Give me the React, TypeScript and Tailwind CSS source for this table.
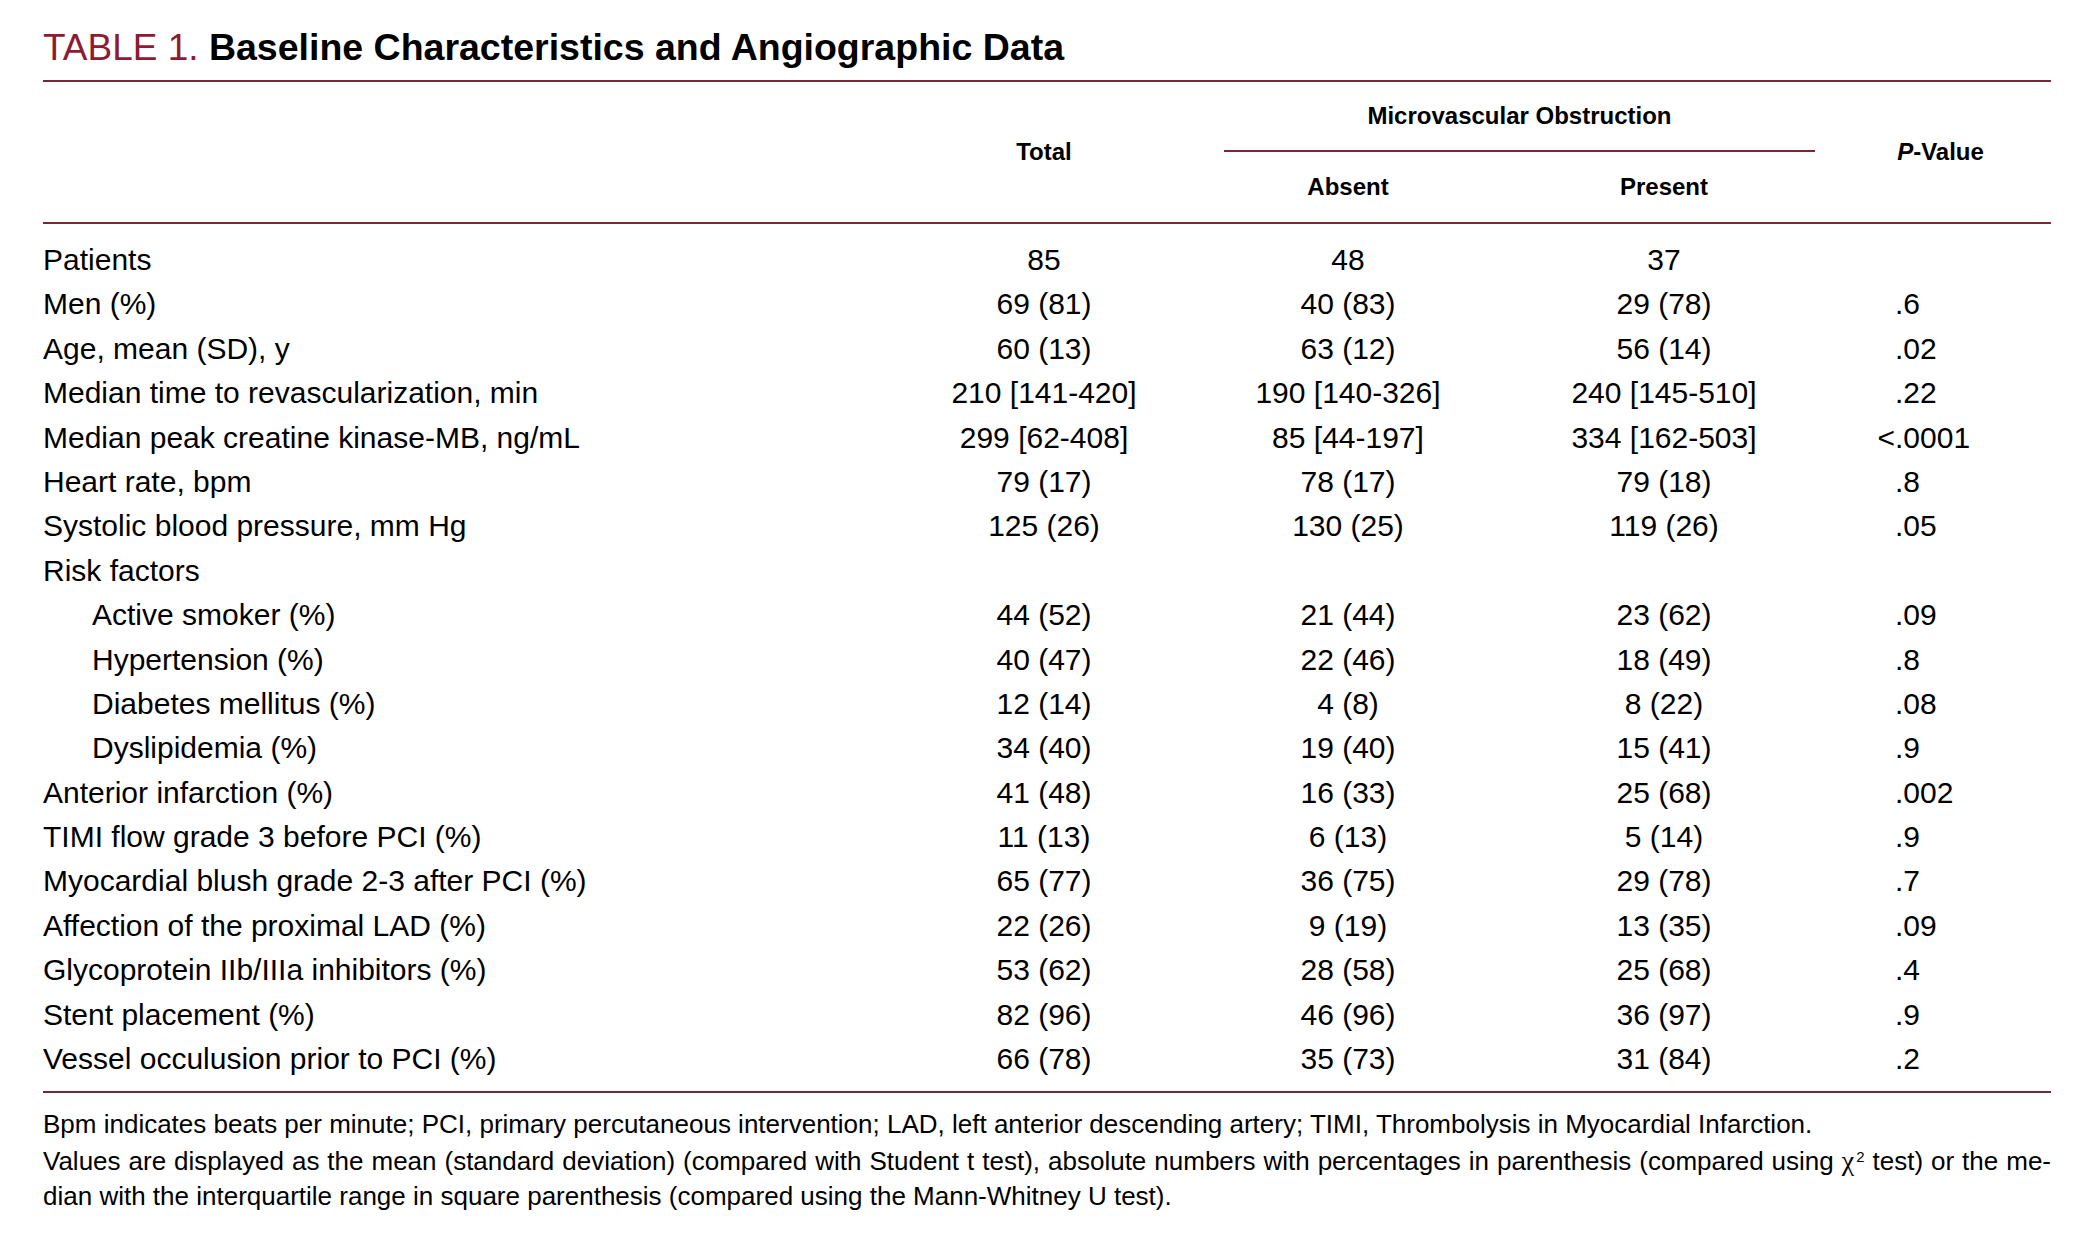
const rows = [
  { label: 'Patients', total: '85', absent: '48', present: '37', p: '' },
  { label: 'Men (%)', total: '69 (81)', absent: '40 (83)', present: '29 (78)', p: '.6' },
  { label: 'Age, mean (SD), y', total: '60 (13)', absent: '63 (12)', present: '56 (14)', p: '.02' },
  { label: 'Median time to revascularization, min', total: '210 [141-420]', absent: '190 [140-326]', present: '240 [145-510]', p: '.22' },
  { label: 'Median peak creatine kinase-MB, ng/mL', total: '299 [62-408]', absent: '85 [44-197]', present: '334 [162-503]', p: '<.0001' },
  { label: 'Heart rate, bpm', total: '79 (17)', absent: '78 (17)', present: '79 (18)', p: '.8' },
  { label: 'Systolic blood pressure, mm Hg', total: '125 (26)', absent: '130 (25)', present: '119 (26)', p: '.05' },
  { label: 'Risk factors', total: '', absent: '', present: '', p: '' },
  { label: 'Active smoker (%)', total: '44 (52)', absent: '21 (44)', present: '23 (62)', p: '.09', sub: true },
  { label: 'Hypertension (%)', total: '40 (47)', absent: '22 (46)', present: '18 (49)', p: '.8', sub: true },
  { label: 'Diabetes mellitus (%)', total: '12 (14)', absent: '4 (8)', present: '8 (22)', p: '.08', sub: true },
  { label: 'Dyslipidemia (%)', total: '34 (40)', absent: '19 (40)', present: '15 (41)', p: '.9', sub: true },
  { label: 'Anterior infarction (%)', total: '41 (48)', absent: '16 (33)', present: '25 (68)', p: '.002' },
  { label: 'TIMI flow grade 3 before PCI (%)', total: '11 (13)', absent: '6 (13)', present: '5 (14)', p: '.9' },
  { label: 'Myocardial blush grade 2-3 after PCI (%)', total: '65 (77)', absent: '36 (75)', present: '29 (78)', p: '.7' },
  { label: 'Affection of the proximal LAD (%)', total: '22 (26)', absent: '9 (19)', present: '13 (35)', p: '.09' },
  { label: 'Glycoprotein IIb/IIIa inhibitors (%)', total: '53 (62)', absent: '28 (58)', present: '25 (68)', p: '.4' },
  { label: 'Stent placement (%)', total: '82 (96)', absent: '46 (96)', present: '36 (97)', p: '.9' },
  { label: 'Vessel occulusion prior to PCI (%)', total: '66 (78)', absent: '35 (73)', present: '31 (84)', p: '.2' },
];

// p-values line up on the decimal point
function PValue({ value }: { value: string }) {
  if (!value) return null;
  const i = value.indexOf('.');
  return (
    <div className="flex pl-[45px]">
      <span className="w-[20px] text-right">{value.slice(0, i)}</span>
      <span>{value.slice(i)}</span>
    </div>
  );
}

export default function App() {
  return (
    <div className="min-h-screen bg-white font-['Liberation_Sans',Arial,sans-serif] text-black">
      <div className="pl-[43px] pt-[25px] w-[2051px]">
        <h1 className="text-[37px] leading-[44px] h-[55px] whitespace-nowrap">
          <span className="text-[#8e1b33]">TABLE 1. </span>
          <span className="font-bold text-[37.5px]">Baseline Characteristics and Angiographic Data</span>
        </h1>

        <div className="border-t-2 border-b-2 border-[#7a2638] grid grid-cols-[847px_308px_300px_332px_221px] grid-rows-[70px_70px] text-[24px] font-bold">
          <div className="col-start-2 row-start-1 row-span-2 flex items-center justify-center">Total</div>
          <div className="col-start-3 col-span-2 row-start-1 ml-[26px] mr-[15px] border-b-2 border-[#7a2638] flex items-center justify-center">
            Microvascular Obstruction
          </div>
          <div className="col-start-3 row-start-2 flex items-center justify-center">Absent</div>
          <div className="col-start-4 row-start-2 flex items-center justify-center">Present</div>
          <div className="col-start-5 row-start-1 row-span-2 flex items-center justify-center">
            <span className="italic">P</span>-Value
          </div>
        </div>

        <div className="pt-[14px] pb-[10px] border-b-2 border-[#7a2638] text-[30px]">
          {rows.map((r) => (
            <div key={r.label} className="grid grid-cols-[847px_308px_300px_332px_221px] h-[44.4px] leading-[44.4px] whitespace-nowrap">
              <div className={r.sub ? 'pl-[49px]' : ''}>{r.label}</div>
              <div className="text-center">{r.total}</div>
              <div className="text-center">{r.absent}</div>
              <div className="text-center">{r.present}</div>
              <PValue value={r.p} />
            </div>
          ))}
        </div>

        <div className="pt-[14px] text-[26px] leading-[35.5px]">
          <p className="whitespace-nowrap">
            Bpm indicates beats per minute; PCI, primary percutaneous intervention; LAD, left anterior descending artery; TIMI, Thrombolysis in Myocardial Infarction.
          </p>
          <p className="text-justify [text-align-last:justify] whitespace-nowrap">
            Values are displayed as the mean (standard deviation) (compared with Student t test), absolute numbers with percentages in parenthesis (compared using{' '}
            <span className="font-['Liberation_Serif',serif] text-[28px]">χ</span>
            <sup className="text-[15px] ml-[2px]">2</sup> test) or the me-
          </p>
          <p className="whitespace-nowrap">dian with the interquartile range in square parenthesis (compared using the Mann-Whitney U test).</p>
        </div>
      </div>
    </div>
  );
}
